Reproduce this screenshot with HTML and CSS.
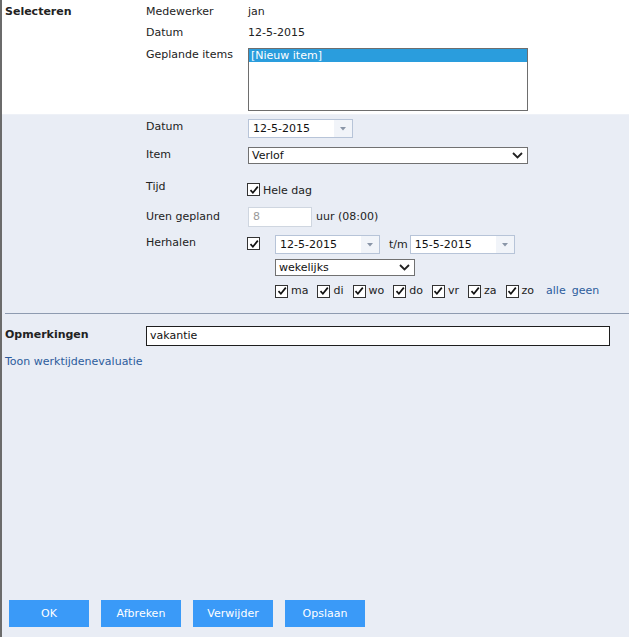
FILE: index.html
```html
<!DOCTYPE html>
<html>
<head>
<meta charset="utf-8">
<link rel="stylesheet" href="styles.css">
</head>
<body>
<div class="page">
  <div class="sec-top">
    <div class="row r1">
      <div class="main-lbl bold">Selecteren</div>
      <div class="lbl">Medewerker</div>
      <div class="field">jan</div>
    </div>
    <div class="row r2">
      <div class="main-lbl"></div>
      <div class="lbl">Datum</div>
      <div class="field">12-5-2015</div>
    </div>
    <div class="row r3">
      <div class="main-lbl"></div>
      <div class="lbl">Geplande items</div>
      <div class="field">
        <div class="listbox"><div class="opt-sel">[Nieuw item]</div></div>
      </div>
    </div>
  </div>

  <div class="sec-blue">
    <div class="row b-datum">
      <div class="main-lbl"></div>
      <div class="lbl">Datum</div>
      <div class="field">
        <div class="date"><span class="date-val">12-5-2015</span><span class="date-btn"><svg width="6" height="4" viewBox="0 0 6 4"><path d="M0 0h6L3 3.5z" fill="#8a96a8"/></svg></span></div>
      </div>
    </div>
    <div class="row b-item">
      <div class="main-lbl"></div>
      <div class="lbl">Item</div>
      <div class="field">
        <div class="select wide"><span>Verlof</span><svg width="11" height="7" viewBox="0 0 11 7"><path d="M1 1l4.5 4.5L10 1" fill="none" stroke="#222" stroke-width="1.8"/></svg></div>
      </div>
    </div>
    <div class="row b-tijd">
      <div class="main-lbl"></div>
      <div class="lbl">Tijd</div>
      <div class="field tijd-field">
        <span class="cb"><svg width="10" height="10" viewBox="0 0 10 10"><path d="M1.5 5.2l2.4 2.6L8.8 1.6" fill="none" stroke="#111" stroke-width="1.7"/></svg></span>
        <span class="cb-text">Hele dag</span>
      </div>
    </div>
    <div class="row b-uren">
      <div class="main-lbl"></div>
      <div class="lbl">Uren gepland</div>
      <div class="field uren-field">
        <div class="uren-input">8</div>
        <span class="uur">uur (08:00)</span>
      </div>
    </div>
    <div class="row b-herh">
      <div class="main-lbl"></div>
      <div class="lbl">Herhalen</div>
      <div class="field herh-field">
        <span class="cb cb-h"><svg width="10" height="10" viewBox="0 0 10 10"><path d="M1.5 5.2l2.4 2.6L8.8 1.6" fill="none" stroke="#111" stroke-width="1.7"/></svg></span>
        <div class="herh-col">
          <div class="herh-dates">
            <div class="date"><span class="date-val">12-5-2015</span><span class="date-btn"><svg width="6" height="4" viewBox="0 0 6 4"><path d="M0 0h6L3 3.5z" fill="#8a96a8"/></svg></span></div>
            <span class="tm">t/m</span>
            <div class="date"><span class="date-val">15-5-2015</span><span class="date-btn"><svg width="6" height="4" viewBox="0 0 6 4"><path d="M0 0h6L3 3.5z" fill="#8a96a8"/></svg></span></div>
          </div>
          <div class="select narrow"><span>wekelijks</span><svg width="11" height="7" viewBox="0 0 11 7"><path d="M1 1l4.5 4.5L10 1" fill="none" stroke="#222" stroke-width="1.8"/></svg></div>
          <div class="days">
            <span class="day"><span class="cb"><svg width="10" height="10" viewBox="0 0 10 10"><path d="M1.5 5.2l2.4 2.6L8.8 1.6" fill="none" stroke="#111" stroke-width="1.7"/></svg></span>ma</span>
            <span class="day"><span class="cb"><svg width="10" height="10" viewBox="0 0 10 10"><path d="M1.5 5.2l2.4 2.6L8.8 1.6" fill="none" stroke="#111" stroke-width="1.7"/></svg></span>di</span>
            <span class="day"><span class="cb"><svg width="10" height="10" viewBox="0 0 10 10"><path d="M1.5 5.2l2.4 2.6L8.8 1.6" fill="none" stroke="#111" stroke-width="1.7"/></svg></span>wo</span>
            <span class="day"><span class="cb"><svg width="10" height="10" viewBox="0 0 10 10"><path d="M1.5 5.2l2.4 2.6L8.8 1.6" fill="none" stroke="#111" stroke-width="1.7"/></svg></span>do</span>
            <span class="day"><span class="cb"><svg width="10" height="10" viewBox="0 0 10 10"><path d="M1.5 5.2l2.4 2.6L8.8 1.6" fill="none" stroke="#111" stroke-width="1.7"/></svg></span>vr</span>
            <span class="day"><span class="cb"><svg width="10" height="10" viewBox="0 0 10 10"><path d="M1.5 5.2l2.4 2.6L8.8 1.6" fill="none" stroke="#111" stroke-width="1.7"/></svg></span>za</span>
            <span class="day"><span class="cb"><svg width="10" height="10" viewBox="0 0 10 10"><path d="M1.5 5.2l2.4 2.6L8.8 1.6" fill="none" stroke="#111" stroke-width="1.7"/></svg></span>zo</span>
            <a class="link alle">alle</a>
            <a class="link">geen</a>
          </div>
        </div>
      </div>
    </div>

    <div class="divider"></div>

    <div class="row opm">
      <div class="main-lbl bold">Opmerkingen</div>
      <div class="opm-input">vakantie</div>
    </div>
    <div class="toon"><a class="link">Toon werktijdenevaluatie</a></div>

    <div class="buttons">
      <button class="btn">OK</button>
      <button class="btn">Afbreken</button>
      <button class="btn">Verwijder</button>
      <button class="btn">Opslaan</button>
    </div>
  </div>
</div>
</body>
</html>
```

FILE: styles.css
```css
html, body {
  margin: 0;
  padding: 0;
}
body {
  font-family: "DejaVu Sans", Verdana, sans-serif;
  font-size: 11px;
  line-height: 14px;
  color: #222;
  width: 629px;
  height: 637px;
  overflow: hidden;
}
.page {
  height: 637px;
  border-left: 2px solid #6b6b6b;
  box-sizing: border-box;
  display: flex;
  flex-direction: column;
}
.sec-top {
  background: #fff;
  height: 114px;
  padding-top: 5px;
  box-sizing: border-box;
}
.sec-blue {
  flex: 1;
  background: #e9edf5;
  display: flex;
  flex-direction: column;
  border-top: 1px solid #eef1f7;
}
.row {
  display: flex;
  align-items: flex-start;
}
.main-lbl {
  width: 141px;
  padding-left: 3px;
  flex: none;
}
.bold { font-weight: bold; }
.lbl {
  width: 102px;
  flex: none;
}
.field { flex: none; }
.r2 { margin-top: 7px; }
.r3 { margin-top: 8px; }
.listbox {
  width: 280px;
  height: 63px;
  border: 1px solid #6e6e6e;
  box-sizing: border-box;
  background: #fff;
}
.opt-sel {
  background: #2a9ddd;
  color: #fff;
  height: 13px;
  line-height: 13px;
  padding-left: 2px;
}

/* blue section */
.b-datum { margin-top: 4px; }
.b-datum .lbl { margin-top: 1px; }
.date {
  width: 105px;
  height: 19px;
  border: 1px solid #b7c4d8;
  box-sizing: border-box;
  background: #fff;
  display: flex;
}
.date-val {
  flex: 1;
  padding-left: 4px;
  line-height: 17px;
  color: #111;
}
.date-btn {
  width: 18px;
  background: #f1f4f9;
  display: flex;
  align-items: center;
  justify-content: center;
}
.b-item { margin-top: 9px; }
.b-item .lbl { margin-top: 1px; }
.select {
  height: 17px;
  border: 1px solid #717171;
  box-sizing: border-box;
  background: #fff;
  display: flex;
  align-items: center;
  justify-content: space-between;
  padding: 0 4px 0 3px;
  color: #111;
}
.select.wide { width: 280px; }
.select.narrow { width: 140px; margin-top: 5px; }
.b-tijd { margin-top: 15px; }
.b-tijd .lbl { margin-top: 1px; }
.tijd-field {
  display: flex;
  align-items: center;
  margin-top: 2px;
  margin-left: -1px;
}
.cb {
  width: 13px;
  height: 13px;
  border: 1px solid #333;
  box-sizing: border-box;
  background: #fff;
  display: inline-flex;
  align-items: center;
  justify-content: center;
  flex: none;
}
.cb-text { margin-left: 3px; margin-top: 3px; }
.b-uren { margin-top: 11px; }
.b-uren .lbl { margin-top: 1px; }
.uren-field {
  display: flex;
  align-items: center;
  margin-top: -2px;
}
.uren-input {
  width: 64px;
  height: 20px;
  border: 1px solid #cfd6e0;
  box-sizing: border-box;
  background: #fff;
  color: #999;
  padding-left: 4px;
  line-height: 18px;
}
.uur { margin-left: 4px; }
.b-herh { margin-top: 9px; }
.herh-field {
  display: flex;
  align-items: flex-start;
  margin-left: -1px;
}
.cb-h { margin-top: 1px; }
.herh-col {
  margin-left: 15px;
  margin-top: -1px;
}
.herh-dates {
  display: flex;
  align-items: center;
}
.tm { margin: 0 2px 0 9px; }
.days {
  display: flex;
  align-items: center;
  margin-top: 8px;
}
.day {
  display: inline-flex;
  align-items: center;
  margin-right: 9px;
}
.day .cb { margin-right: 3px; }
.link {
  color: #2c5c9c;
  text-decoration: none;
}
.alle { margin-left: 3px; margin-right: 6px; }
.divider {
  margin-top: 15px;
  margin-left: 3px;
  border-top: 1px solid #8e9bb0;
}
.opm {
  margin-top: 12px;
  align-items: center;
}
.opm .main-lbl { margin-top: -2px; }
.opm-input {
  width: 464px;
  height: 20px;
  border: 1px solid #1e1e1e;
  box-sizing: border-box;
  background: #fff;
  padding-left: 3px;
  line-height: 18px;
  color: #111;
}
.toon {
  margin-top: 9px;
  padding-left: 3px;
}
.buttons {
  margin-top: auto;
  padding: 0 0 10px 7px;
  display: flex;
  gap: 12px;
}
.btn {
  width: 80px;
  height: 27px;
  border: none;
  background: #3a9af8;
  color: #fff;
  font-family: "DejaVu Sans", Verdana, sans-serif;
  font-size: 11px;
  padding: 0;
}
```
